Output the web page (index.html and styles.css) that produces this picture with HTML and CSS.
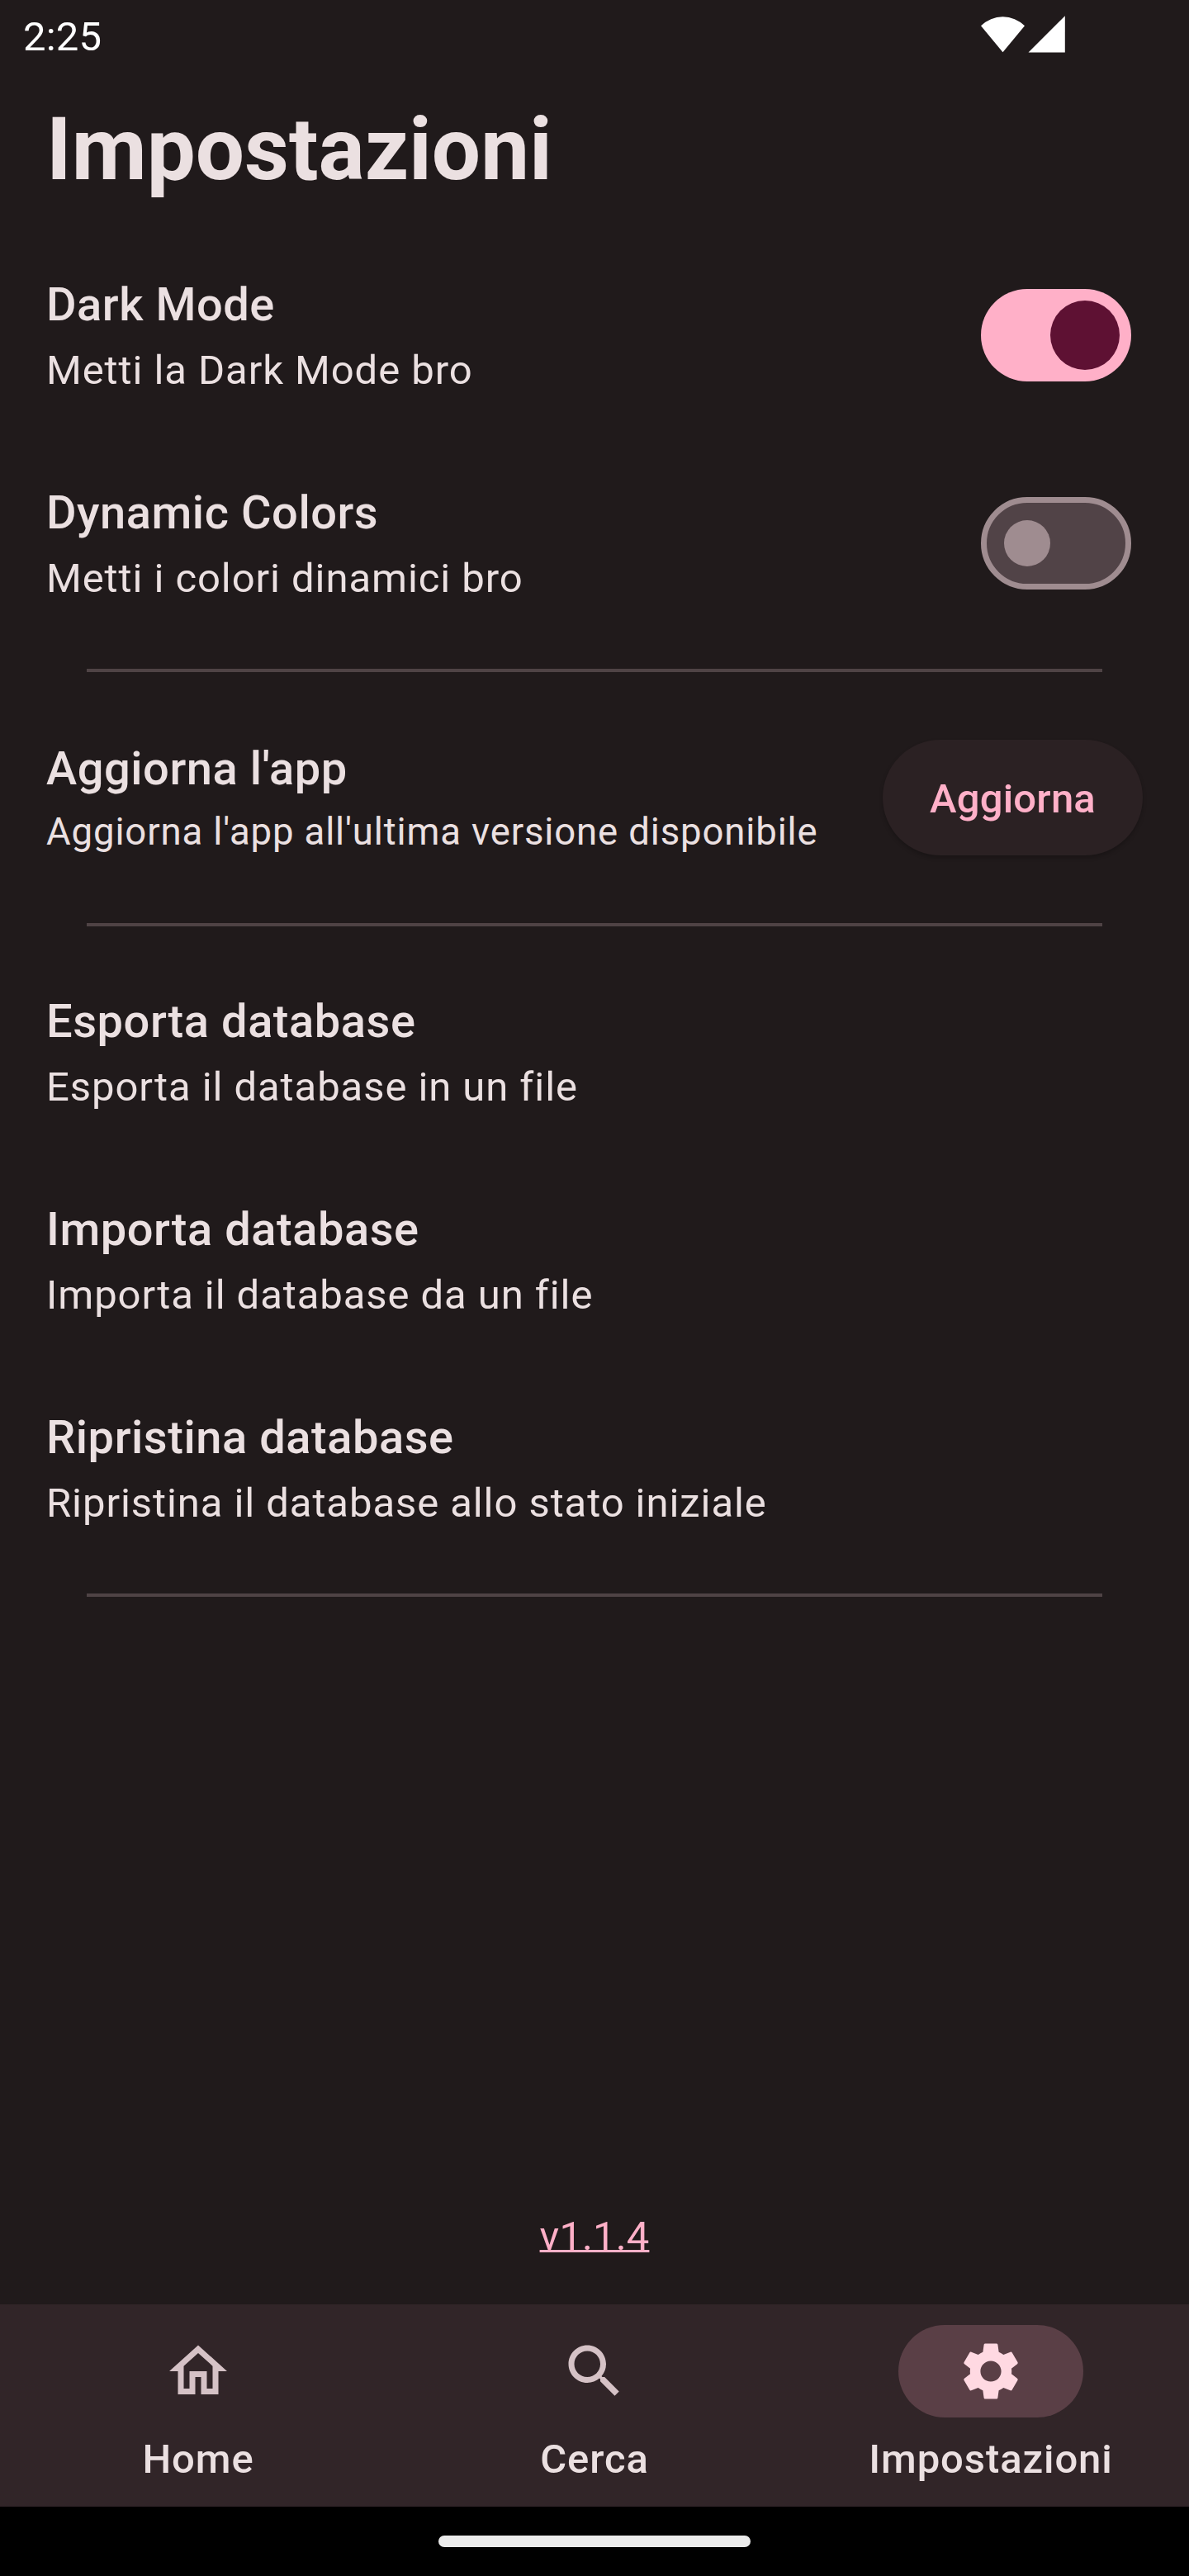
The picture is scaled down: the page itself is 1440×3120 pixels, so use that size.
FILE: index.html
```
<!DOCTYPE html>
<html lang="it">
<head>
<meta charset="utf-8">
<title>Impostazioni</title>
<link rel="stylesheet" href="styles.css">
</head>
<body>
<div class="screen">
  <div class="status-bar">
    <span class="clock">2:25</span>
    <svg class="status-icons" width="102" height="45" viewBox="0 0 102 45" aria-hidden="true">
      <path fill="#fff" d="M0 12.3A37.6 37.6 0 0 1 53 12.3L26.5 44.3Z"/>
      <path fill="#fff" d="M57.5 44.6L101.8 .3V44.6Z"/>
    </svg>
  </div>

  <header class="header"><h1 class="title">Impostazioni</h1></header>

  <main class="settings">
    <section class="group">
      <div class="row">
        <div class="row-text">
          <h2 class="row-title">Dark Mode</h2>
          <p class="row-desc">Metti la Dark Mode bro</p>
        </div>
        <div class="switch switch-on" role="switch" aria-checked="true"><span class="thumb"></span></div>
      </div>
      <div class="row">
        <div class="row-text">
          <h2 class="row-title">Dynamic Colors</h2>
          <p class="row-desc">Metti i colori dinamici bro</p>
        </div>
        <div class="switch switch-off" role="switch" aria-checked="false"><span class="thumb"></span></div>
      </div>
    </section>
    <hr class="divider">
    <section class="group">
      <div class="row row-action">
        <div class="row-text row-text-compact">
          <h2 class="row-title">Aggiorna l'app</h2>
          <p class="row-desc">Aggiorna l'app all'ultima versione disponibile</p>
        </div>
        <button class="button">Aggiorna</button>
      </div>
    </section>
    <hr class="divider">
    <section class="group">
      <div class="row">
        <div class="row-text">
          <h2 class="row-title">Esporta database</h2>
          <p class="row-desc">Esporta il database in un file</p>
        </div>
      </div>
      <div class="row">
        <div class="row-text">
          <h2 class="row-title">Importa database</h2>
          <p class="row-desc">Importa il database da un file</p>
        </div>
      </div>
      <div class="row">
        <div class="row-text">
          <h2 class="row-title">Ripristina database</h2>
          <p class="row-desc">Ripristina il database allo stato iniziale</p>
        </div>
      </div>
    </section>
    <hr class="divider">
    <a class="version">v1.1.4</a>
  </main>

  <nav class="nav">
    <div class="nav-item">
      <span class="pill"><svg class="icon" viewBox="0 0 24 24"><path d="M12 5.69l5 4.5V18h-2v-6H9v6H7v-7.81l5-4.5M12 3L2 12h3v8h6v-6h2v6h6v-8h3L12 3z"/></svg></span>
      <span class="nav-label">Home</span>
    </div>
    <div class="nav-item">
      <span class="pill"><svg class="icon" viewBox="0 0 24 24"><path d="M15.5 14h-.79l-.28-.27C15.41 12.59 16 11.11 16 9.5 16 5.91 13.09 3 9.5 3S3 5.91 3 9.5 5.91 16 9.5 16c1.61 0 3.09-.59 4.23-1.57l.27.28v.79l5 4.99L20.49 19l-4.99-5zm-6 0C7.01 14 5 11.99 5 9.5S7.01 5 9.5 5 14 7.01 14 9.5 11.99 14 9.5 14z"/></svg></span>
      <span class="nav-label">Cerca</span>
    </div>
    <div class="nav-item nav-active">
      <span class="pill"><svg class="icon" viewBox="0 0 24 24"><path d="M19.14 12.94c.04-.3.06-.61.06-.94 0-.32-.02-.64-.07-.94l2.03-1.58c.18-.14.23-.41.12-.61l-1.92-3.32c-.12-.22-.37-.29-.59-.22l-2.39.96c-.5-.38-1.03-.7-1.62-.94l-.36-2.54c-.04-.24-.24-.41-.48-.41h-3.84c-.24 0-.43.17-.47.41l-.36 2.54c-.59.24-1.13.57-1.62.94l-2.39-.96c-.22-.08-.47 0-.59.22L2.74 8.87c-.12.21-.08.47.12.61l2.03 1.58c-.05.3-.09.63-.09.94s.02.64.07.94l-2.03 1.58c-.18.14-.23.41-.12.61l1.92 3.32c.12.22.37.29.59.22l2.39-.96c.5.38 1.03.7 1.62.94l.36 2.54c.05.24.24.41.48.41h3.84c.24 0 .44-.17.47-.41l.36-2.54c.59-.24 1.13-.56 1.62-.94l2.39.96c.22.08.47 0 .59-.22l1.92-3.32c.12-.22.07-.47-.12-.61l-2.01-1.58zM12 15.6c-1.98 0-3.6-1.62-3.6-3.6s1.62-3.6 3.6-3.6 3.6 1.62 3.6 3.6-1.62 3.6-3.6 3.6z"/></svg></span>
      <span class="nav-label">Impostazioni</span>
    </div>
  </nav>
  <div class="gesture-bar"><span class="handle"></span></div>
</div>
</body>
</html>
```

FILE: styles.css
```
* { box-sizing: border-box; }
body { margin: 0; background: #201a1b; }
h1, h2, p { margin: 0; }

.screen {
  width: 1440px;
  height: 3120px;
  display: flex;
  flex-direction: column;
  background: #201a1b;
  color: #ebe0e1;
  font-family: "Roboto", sans-serif;
}

.status-bar {
  height: 84px;
  padding: 10px 150px 0 28px;
  display: flex;
  justify-content: space-between;
  align-items: flex-start;
  color: #fff;
}
.clock { font-size: 49px; line-height: 70px; letter-spacing: .2px; }
.status-icons { margin-top: 9px; }

.header { height: 196px; padding: 28px 56px 0; }
.title { font-size: 105px; line-height: 140px; font-weight: 700; }

.settings { flex: 1; display: flex; flex-direction: column; }
.row {
  height: 252px;
  padding: 0 70px 0 56px;
  display: flex;
  align-items: center;
  justify-content: space-between;
}
.row-action { padding-right: 56px; }
.row-text { display: flex; flex-direction: column; gap: 3px; padding-top: 1px; white-space: nowrap; }
.row-title { font-size: 56px; line-height: 82px; font-weight: 500; letter-spacing: .55px; }
.row-desc { font-size: 49px; line-height: 72px; letter-spacing: .93px; }
.row-text-compact { gap: 1px; }
.row-text-compact .row-desc { font-size: 45.5px; line-height: 70px; letter-spacing: .875px; }

.divider { width: 1230px; height: 4px; margin: 26px auto; border: 0; background: #4f4345; }

.switch { width: 182px; height: 112px; border-radius: 56px; display: flex; align-items: center; }
.switch-on { padding-right: 14px; justify-content: flex-end; background: #ffb0c8; }
.switch-off { padding-left: 21px; border: 7px solid #9f8c90; background: #514347; }
.thumb { border-radius: 50%; }
.switch-on .thumb { width: 84px; height: 84px; background: #5e1133; }
.switch-off .thumb { width: 56px; height: 56px; background: #9f8c90; }

.button {
  width: 315px;
  height: 140px;
  padding: 4px 0 0;
  border: 0;
  border-radius: 70px;
  background: #2b2123;
  box-shadow: 0 3px 5px rgba(0, 0, 0, .22);
  color: #ffb0c8;
  font: 500 49px/70px "Roboto", sans-serif;
  letter-spacing: .2px;
}

.version {
  margin: auto auto 47px;
  color: #ffb0c8;
  font-size: 49px;
  line-height: 70px;
  letter-spacing: .1px;
  text-decoration: underline 3px;
  text-underline-offset: 0;
  text-decoration-skip-ink: none;
}

.nav { height: 245px; padding-top: 25px; display: flex; background: #312528; }
.nav-item { flex: 1; display: flex; flex-direction: column; align-items: center; gap: 16px; }
.pill { width: 224px; height: 112px; border-radius: 56px; display: flex; align-items: center; justify-content: center; }
.icon { width: 84px; height: 84px; fill: #d5c2c6; }
.nav-label { font-size: 49px; line-height: 70px; font-weight: 500; letter-spacing: .9px; }
.nav-active .pill { background: #5a3f46; }
.nav-active .icon { fill: #ffd9e2; }

.gesture-bar { height: 84px; display: flex; align-items: center; justify-content: center; background: #000; }
.handle { width: 378px; height: 14px; border-radius: 7px; background: #ebebeb; }
```
